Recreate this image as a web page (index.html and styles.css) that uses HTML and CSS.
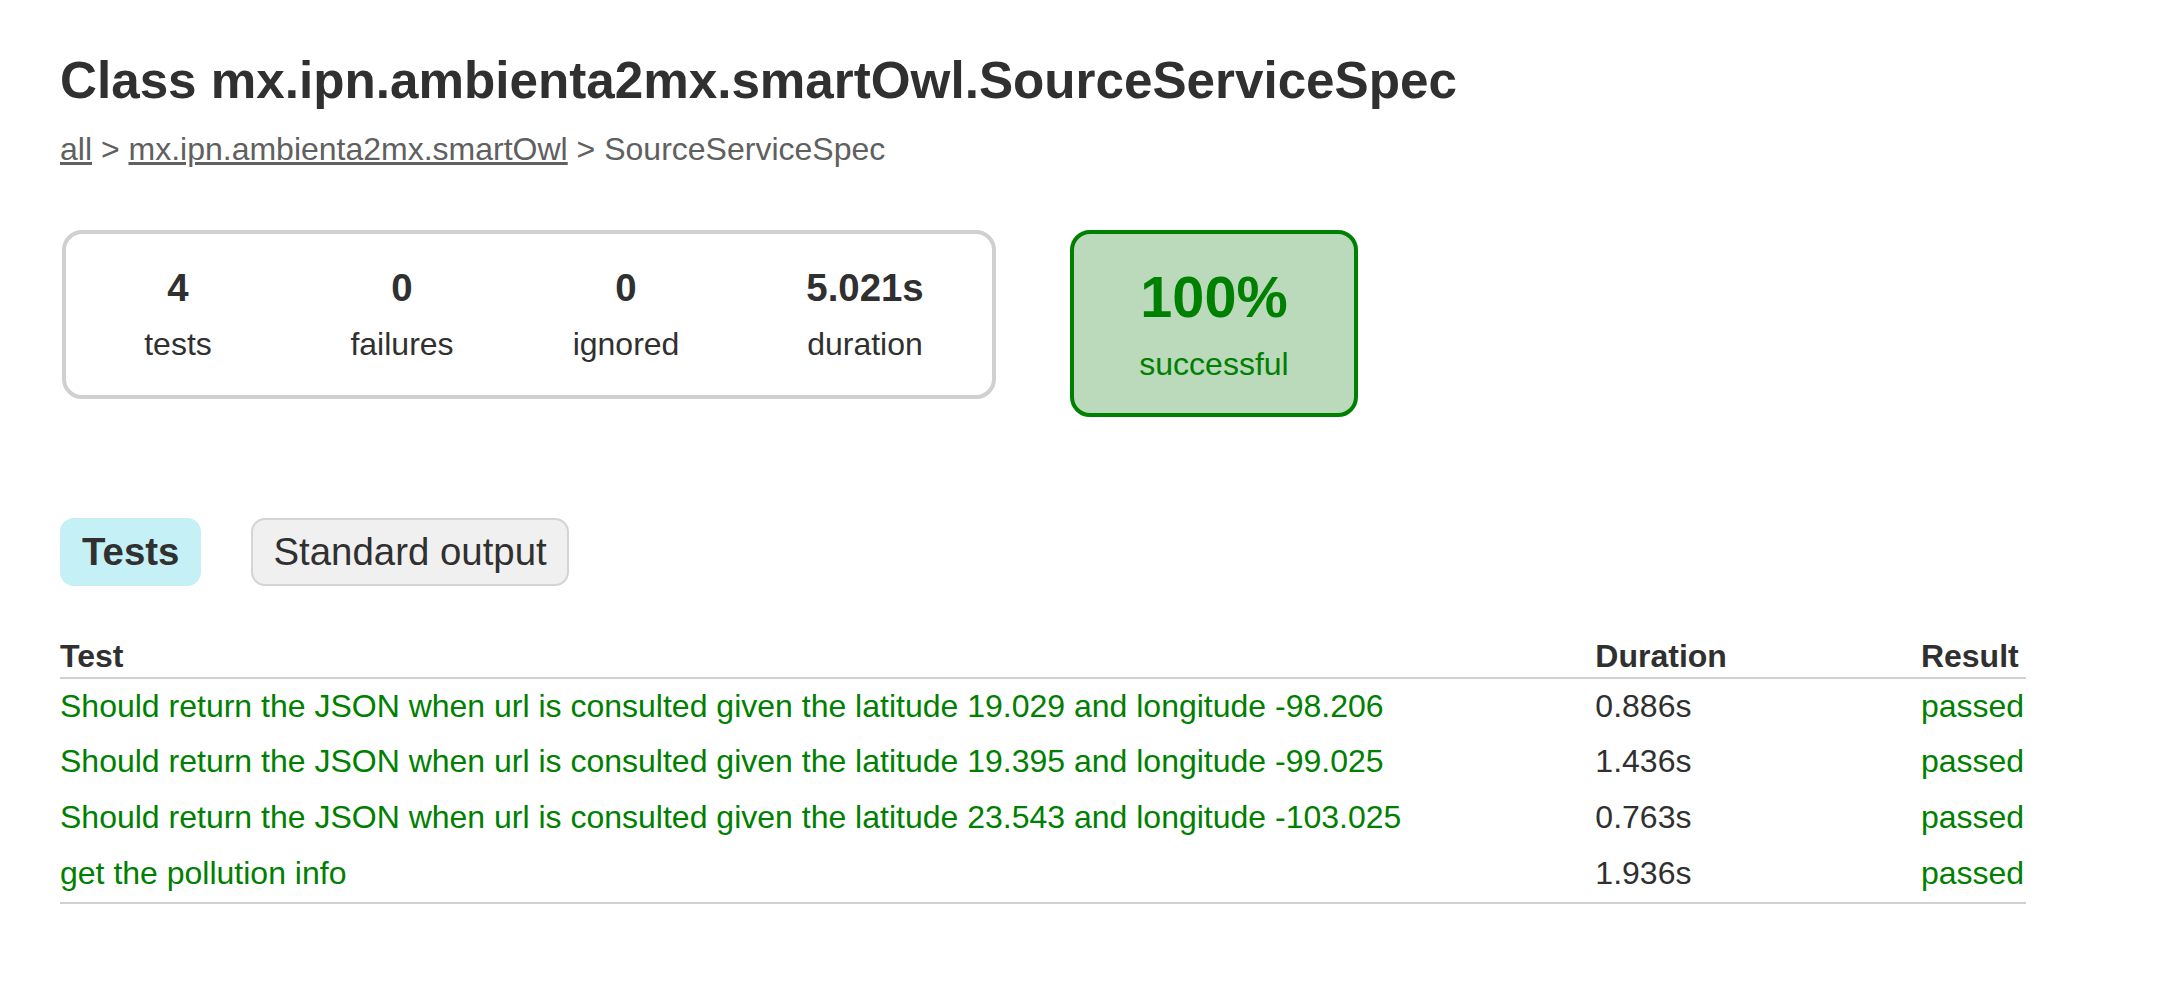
FILE: index.html
```html
<!DOCTYPE html>
<html>
<head>
<meta charset="utf-8">
<title>Test results - Class mx.ipn.ambienta2mx.smartOwl.SourceServiceSpec</title>
<link rel="stylesheet" href="styles.css">
</head>
<body>
<div class="content">
  <h1 class="title">Class mx.ipn.ambienta2mx.smartOwl.SourceServiceSpec</h1>
  <div class="breadcrumbs">
    <a href="#">all</a> &gt; <a href="#">mx.ipn.ambienta2mx.smartOwl</a> &gt; SourceServiceSpec
  </div>
  <div class="summary">
    <div class="summary-group">
      <div class="info-box">
        <div class="counter">4</div>
        <p class="label">tests</p>
      </div>
      <div class="info-box">
        <div class="counter">0</div>
        <p class="label">failures</p>
      </div>
      <div class="info-box">
        <div class="counter">0</div>
        <p class="label">ignored</p>
      </div>
      <div class="info-box info-box-duration">
        <div class="counter">5.021s</div>
        <p class="label">duration</p>
      </div>
    </div>
    <div class="success-rate">
      <div class="percent">100%</div>
      <p class="label">successful</p>
    </div>
  </div>
  <ul class="tab-links">
    <li class="tab-link tab-link-selected"><h2 class="tab-heading">Tests</h2></li>
    <li class="tab-link"><a class="tab-anchor" href="#">Standard output</a></li>
  </ul>
  <div class="tab">
    <table class="results">
      <thead>
        <tr>
          <th class="col-first">Test</th>
          <th>Duration</th>
          <th>Result</th>
        </tr>
      </thead>
      <tbody>
        <tr>
          <td class="col-first success">Should return the JSON when url is consulted given the latitude 19.029 and longitude -98.206</td>
          <td>0.886s</td>
          <td class="success">passed</td>
        </tr>
        <tr>
          <td class="col-first success">Should return the JSON when url is consulted given the latitude 19.395 and longitude -99.025</td>
          <td>1.436s</td>
          <td class="success">passed</td>
        </tr>
        <tr>
          <td class="col-first success">Should return the JSON when url is consulted given the latitude 23.543 and longitude -103.025</td>
          <td>0.763s</td>
          <td class="success">passed</td>
        </tr>
        <tr>
          <td class="col-first success">get the pollution info</td>
          <td>1.936s</td>
          <td class="success">passed</td>
        </tr>
      </tbody>
    </table>
  </div>
</div>
</body>
</html>
```
FILE: styles.css
```css
html, body {
  margin: 0;
  padding: 0;
  background: #ffffff;
}

body {
  font-family: "Liberation Sans", Arial, Helvetica, sans-serif;
  font-size: 32px;
  color: #303030;
}

.content {
  padding: 51px 60px 60px 60px;
}

.title {
  font-size: 51.2px;
  font-weight: bold;
  margin: 0 0 21px 0;
  white-space: nowrap;
}

.breadcrumbs,
.breadcrumbs a {
  color: #606060;
}

.summary {
  display: flex;
  align-items: flex-start;
  margin-top: 60px;
  margin-bottom: 79px;
  padding: 2px;
}

.summary-group {
  display: flex;
  border: 4px solid #d0d0d0;
  border-radius: 20px;
}

.info-box {
  width: 220px;
  margin: 2px;
  padding: 30px 0;
  text-align: center;
}

.info-box-duration {
  width: 250px;
}

.label {
  margin: 0;
}

.counter {
  font-size: 38.4px;
  font-weight: bold;
  margin-bottom: 16px;
}

.success-rate {
  width: 280px;
  margin-left: 74px;
  padding: 30px 0;
  text-align: center;
  border: 4px solid #008000;
  border-radius: 20px;
  background-color: #bbd9bb;
  color: #008000;
}

.percent {
  font-size: 57.6px;
  font-weight: bold;
  margin-bottom: 16px;
}

.tab-links {
  display: flex;
  list-style: none;
  margin: 0 0 31px 0;
  padding: 20px 0;
}

.tab-link {
  padding: 10px 20px;
  margin-right: 50px;
  border: 2px solid #d4d4d4;
  border-radius: 14px;
  background-color: #f0f0f0;
}

.tab-link-selected {
  background-color: #c5f0f5;
  border-color: #c5f0f5;
}

.tab-heading {
  margin: 0;
  padding: 0;
  font-size: 38.4px;
  font-weight: bold;
}

.tab-anchor {
  display: block;
  font-size: 38.4px;
  color: #303030;
  text-decoration: none;
}

.results {
  border-collapse: collapse;
  border-bottom: 2px solid #d0d0d0;
  min-width: 700px;
  font-size: 32px;
  line-height: 35.7px;
}

.results th {
  text-align: left;
  white-space: nowrap;
  padding: 2px 2px 2px 192px;
  border-bottom: 2px solid #d0d0d0;
  font-weight: bold;
}

.results td {
  white-space: nowrap;
  padding: 10px 2px 10px 192px;
}

.results .col-first {
  padding-left: 0;
}

.success {
  color: #008000;
}
```
